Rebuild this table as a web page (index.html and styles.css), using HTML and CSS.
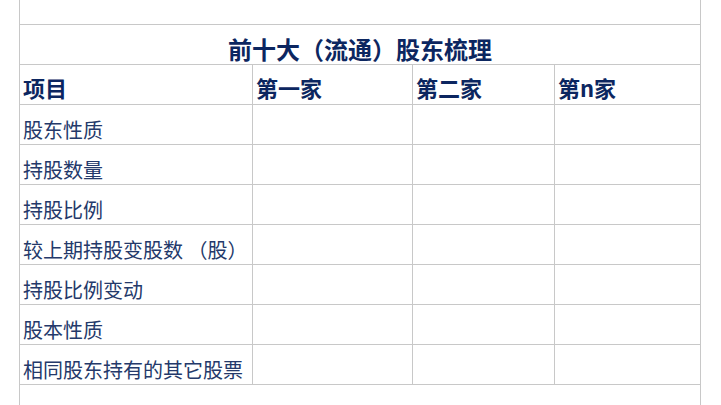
FILE: index.html
```html
<!DOCTYPE html>
<html lang="zh-CN">
<head>
<meta charset="utf-8">
<title>前十大（流通）股东梳理</title>
<link rel="stylesheet" href="styles.css">
</head>
<body>
<div class="sheet">
  <div class="cell span blank-top"></div>
  <div class="cell span title">前十大（流通）股东梳理</div>
  <div class="cell head">项目</div>
  <div class="cell head">第一家</div>
  <div class="cell head">第二家</div>
  <div class="cell head">第n家</div>

  <div class="cell label">股东性质</div><div class="cell"></div><div class="cell"></div><div class="cell"></div>
  <div class="cell label">持股数量</div><div class="cell"></div><div class="cell"></div><div class="cell"></div>
  <div class="cell label">持股比例</div><div class="cell"></div><div class="cell"></div><div class="cell"></div>
  <div class="cell label">较上期持股变股数 （股）</div><div class="cell"></div><div class="cell"></div><div class="cell"></div>
  <div class="cell label">持股比例变动</div><div class="cell"></div><div class="cell"></div><div class="cell"></div>
  <div class="cell label">股本性质</div><div class="cell"></div><div class="cell"></div><div class="cell"></div>
  <div class="cell label">相同股东持有的其它股票</div><div class="cell"></div><div class="cell"></div><div class="cell"></div>

  <div class="cell span blank-bottom"></div>
</div>
</body>
</html>
```

FILE: styles.css
```css
html, body {
  margin: 0;
  padding: 0;
  background: #ffffff;
  height: 405px;
  overflow: hidden;
}

body {
  font-family: "Noto Sans CJK SC", "Noto Sans", sans-serif;
  text-spacing-trim: space-all;
}

.sheet {
  margin-left: 19px;
  width: 682px;
  box-sizing: border-box;
  padding: 0 1px;
  background: #c8c8c8;
  display: grid;
  grid-template-columns: 232px 159px 141px 145px;
  grid-template-rows: 24px repeat(9, 39px) 40px;
  gap: 1px;
}

.cell {
  background: #ffffff;
  display: flex;
  align-items: flex-end;
  padding: 0 0 4px 3px;
  box-sizing: border-box;
  white-space: nowrap;
}

.span {
  grid-column: 1 / -1;
}

.blank-top,
.blank-bottom {
  padding: 0;
}

.title {
  justify-content: center;
  padding: 0 0 3px 0;
  font-size: 24px;
  line-height: 24px;
  font-weight: 700;
  color: #0c2660;
}

.head {
  font-size: 22px;
  line-height: 22px;
  font-weight: 700;
  color: #0c2660;
  padding-bottom: 6px;
}

.label {
  font-size: 20px;
  line-height: 20px;
  color: #24396a;
}
```
